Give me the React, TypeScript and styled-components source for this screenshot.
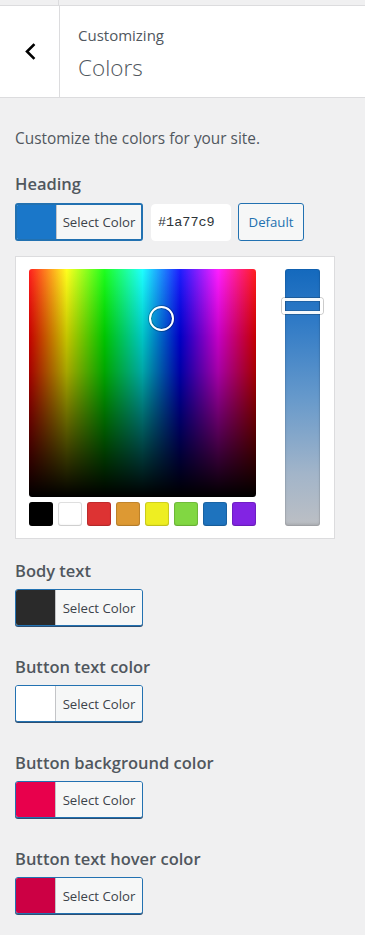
import React from "react";
import styled, { createGlobalStyle } from "styled-components";

const FONT = `"Open Sans", "Noto Sans", "Liberation Sans", Arial, sans-serif`;

const GlobalStyle = createGlobalStyle`
  html, body { margin: 0; padding: 0; }
  body {
    background: #f0f0f1;
    font-family: ${FONT};
    color: #50575e;
  }
  * { box-sizing: border-box; }
`;

const Page = styled.div`
  width: 365px;
  min-height: 935px;
  background: #f0f0f1;
`;

const TopStrip = styled.div`
  height: 6px;
  display: flex;
  background: #f0f0f1;
  border-bottom: 1px solid #dcdcde;
`;

const TopStripCell = styled.div`
  width: 59px;
  border-right: 1px solid #dcdcde;
`;

const Header = styled.div`
  display: flex;
  height: 92px;
  background: #fff;
  border-bottom: 1px solid #dcdcde;
`;

const BackButton = styled.button`
  width: 60px;
  flex: none;
  border: 0;
  border-right: 1px solid #dcdcde;
  background: #fff;
  display: flex;
  align-items: center;
  justify-content: center;
  padding: 0;
  cursor: pointer;
`;

const Titles = styled.div`
  display: flex;
  flex-direction: column;
  padding: 19px 0 0 18px;
`;

const Kicker = styled.span`
  font-size: 15px;
  line-height: 20px;
  color: #50575e;
`;

const Title = styled.h2`
  margin: 8px 0 0;
  font-size: 22.5px;
  line-height: 30px;
  font-weight: 300;
  color: #50575e;
`;

const Content = styled.div`
  padding: 0 15px 20px;
`;

const Description = styled.p`
  margin: 31px 0 0;
  font-size: 15.4px;
  line-height: 20px;
  color: #50575e;
`;

const Label = styled.div<{ $gap: number; $after: number }>`
  margin-top: ${(p) => p.$gap}px;
  margin-bottom: ${(p) => p.$after}px;
  font-size: 16.5px;
  line-height: 24px;
  font-weight: 600;
  color: #50575e;
`;

const ControlRow = styled.div`
  display: flex;
  align-items: center;
`;

const ColorResult = styled.button<{ $active?: boolean }>`
  display: flex;
  width: 128px;
  height: ${(p) => (p.$active ? 38 : 37)}px;
  padding: 0;
  border: ${(p) => (p.$active ? 2 : 1)}px solid #2271b1;
  border-radius: 3px;
  background: #f6f7f7;
  overflow: hidden;
  cursor: pointer;
  box-shadow: ${(p) => (p.$active ? "none" : "0 1px 0 #2c4f73")};
`;

const Swatch = styled.span<{ $color: string }>`
  width: 39px;
  flex: none;
  background: ${(p) => p.$color};
`;

const ResultText = styled.span`
  flex: 1;
  display: flex;
  align-items: center;
  justify-content: center;
  border-left: 1px solid #c3c4c7;
  background: #f6f7f7;
  font-family: ${FONT};
  font-size: 13.2px;
  color: #3c434a;
`;

const HexInput = styled.input`
  width: 80px;
  height: 37px;
  margin-left: 8px;
  padding: 0 0 0 6px;
  border: 1px solid #fff;
  border-radius: 4px;
  background: #fff;
  font-family: "Liberation Mono", "Courier New", monospace;
  font-size: 13.5px;
  color: #2c3338;
  outline: none;
`;

const DefaultButton = styled.button`
  width: 66px;
  height: 38px;
  margin-left: 7px;
  border: 1px solid #2271b1;
  border-radius: 3px;
  background: #f6f7f7;
  color: #2271b1;
  font-family: ${FONT};
  font-size: 13.2px;
  padding: 0;
  cursor: pointer;
`;

const PickerPanel = styled.div`
  width: 320px;
  margin-top: 15px;
  padding: 12px 14px 12px 13px;
  background: #fff;
  border: 1px solid #dcdcde;
  display: flex;
  justify-content: space-between;
`;

const PickerLeft = styled.div`
  display: flex;
  flex-direction: column;
  gap: 5px;
`;

const Square = styled.div`
  position: relative;
  width: 227px;
  height: 228px;
  border-radius: 3px;
  background:
    linear-gradient(to bottom, rgba(0, 0, 0, 0) 0%, rgba(0, 0, 0, 0.35) 45%, #000 100%),
    linear-gradient(to bottom, rgba(255, 255, 255, 0.12), rgba(255, 255, 255, 0) 30%),
    linear-gradient(
      to right,
      #ff0000 0%,
      #ffff00 16.6%,
      #00ff00 33.3%,
      #00ffff 50%,
      #0000ff 66.6%,
      #ff00ff 83.3%,
      #ff0000 100%
    );
`;

const PickerCircle = styled.span`
  position: absolute;
  left: 120px;
  top: 37px;
  width: 25px;
  height: 25px;
  border-radius: 50%;
  border: 2px solid #fff;
  box-shadow: 0 0 0 1px rgba(0, 0, 0, 0.25), inset 0 0 0 1px rgba(0, 0, 0, 0.25);
`;

const SwatchRow = styled.div`
  display: flex;
  gap: 5px;
`;

const PaletteSwatch = styled.span<{ $color: string }>`
  width: 24px;
  height: 24px;
  border-radius: 3px;
  background: ${(p) => p.$color};
  box-shadow: inset 0 0 0 1px rgba(0, 0, 0, 0.12), inset 0 -1px 2px rgba(0, 0, 0, 0.1);
`;

const Slider = styled.div`
  position: relative;
  width: 35px;
  border-radius: 3px;
  background: linear-gradient(to bottom, #1469bd 0%, #2f7ac6 20%, #6699cb 50%, #a3b5c9 80%, #bcbfc4 100%);
  box-shadow: inset 0 0 0 1px rgba(0, 0, 0, 0.06), inset 0 -2px 3px rgba(0, 0, 0, 0.12);
`;

const SliderHandle = styled.span`
  position: absolute;
  left: -3px;
  right: -3px;
  top: 29px;
  height: 16px;
  border-radius: 3px;
  border: 3px solid rgba(255, 255, 255, 0.95);
  box-shadow: 0 0 0 1px rgba(0, 0, 0, 0.2), inset 0 0 0 1px rgba(0, 0, 0, 0.15);
`;

const Chevron = () => (
  <svg width="12" height="17" viewBox="0 0 12 17" aria-hidden="true">
    <polyline
      points="9.5,2 3,8.5 9.5,15"
      fill="none"
      stroke="#000"
      strokeWidth="2.6"
      strokeLinecap="square"
    />
  </svg>
);

const palette = ["#000000", "#ffffff", "#dd3333", "#dd9933", "#eeee22", "#81d742", "#1e73be", "#8224e3"];

const fields = [
  { label: "Body text", color: "#2a2a2a" },
  { label: "Button text color", color: "#ffffff" },
  { label: "Button background color", color: "#e8004c" },
  { label: "Button text hover color", color: "#cc0044" },
];

export default function App() {
  return (
    <Page>
      <GlobalStyle />
      <TopStrip>
        <TopStripCell />
      </TopStrip>
      <Header>
        <BackButton aria-label="Back">
          <Chevron />
        </BackButton>
        <Titles>
          <Kicker>Customizing</Kicker>
          <Title>Colors</Title>
        </Titles>
      </Header>
      <Content>
        <Description>Customize the colors for your site.</Description>

        <Label $gap={23} $after={7}>Heading</Label>
        <ControlRow>
          <ColorResult $active>
            <Swatch $color="#1a77c9" />
            <ResultText>Select Color</ResultText>
          </ColorResult>
          <HexInput defaultValue="#1a77c9" />
          <DefaultButton>Default</DefaultButton>
        </ControlRow>

        <PickerPanel>
          <PickerLeft>
            <Square>
              <PickerCircle />
            </Square>
            <SwatchRow>
              {palette.map((c) => (
                <PaletteSwatch key={c} $color={c} />
              ))}
            </SwatchRow>
          </PickerLeft>
          <Slider>
            <SliderHandle />
          </Slider>
        </PickerPanel>

        {fields.map((f, i) => (
          <React.Fragment key={f.label}>
            <Label $gap={i === 0 ? 20 : 29} $after={6}>
              {f.label}
            </Label>
            <ColorResult>
              <Swatch $color={f.color} />
              <ResultText>Select Color</ResultText>
            </ColorResult>
          </React.Fragment>
        ))}
      </Content>
    </Page>
  );
}
